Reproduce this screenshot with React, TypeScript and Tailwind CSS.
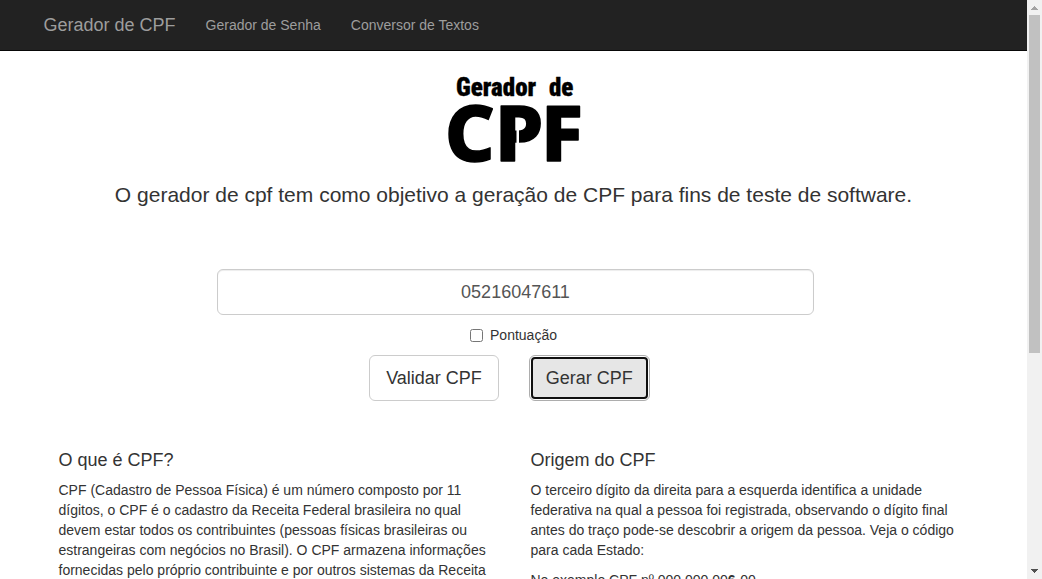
import { useState } from "react";

function Logo() {
  return (
    <svg
      viewBox="0 0 140 96"
      className="mx-auto block h-24 w-[140px] overflow-visible"
      role="img"
      aria-label="Gerador de CPF"
    >
      <g fill="#000" stroke="#000" strokeLinejoin="round">
        <g fontFamily='"Roboto Condensed", Roboto, sans-serif' fontWeight="900" fontSize="25" strokeWidth="0.3">
          <text x="12" y="24">Gerador</text>
          <text x="105" y="24">de</text>
        </g>
        <g fontFamily='"Noto Sans", sans-serif' fontWeight="800" fontSize="77" strokeWidth="1.6">
          <text x="1" y="89">C</text>
          <text x="51" y="89">P</text>
          <text x="97" y="89">F</text>
        </g>
      </g>
      <path d="M72.500 46h2.500v27h-2.500z" fill="#fff" />
    </svg>
  );
}

function NavBar() {
  return (
    <nav className="border-b border-[#080808] bg-[#222] text-[#9d9d9d]">
      <div className="mx-auto flex h-[50px] max-w-[970px] items-center gap-[30px] px-[15px] text-sm">
        <a href="#inicio" className="text-lg">Gerador de CPF</a>
        <a href="#senha">Gerador de Senha</a>
        <a href="#textos">Conversor de Textos</a>
      </div>
    </nav>
  );
}

function ScrollRail() {
  return (
    <div aria-hidden="true" className="flex w-[15px] shrink-0 flex-col items-center bg-[#f1f1f1]">
      <svg viewBox="0 0 15 15" className="h-[15px] w-[15px] shrink-0" shapeRendering="crispEdges">
        <path d="M7 6h1v1h1v1h1v1h1v1H4V9h1V8h1V7h1z" fill="#a3a3a3" />
      </svg>
      <div className="flex w-[11px] grow flex-col">
        <div className="h-[61.5%] bg-[#c1c1c1]" />
      </div>
      <svg viewBox="0 0 15 15" className="h-[15px] w-[15px] shrink-0" shapeRendering="crispEdges">
        <path d="M4 5h7v1h-1v1H9v1H8v1H7V8H6V7H5V6H4z" fill="#505050" />
      </svg>
    </div>
  );
}

function GeneratorForm() {
  const [cpf, setCpf] = useState("05216047611");
  return (
    <form onSubmit={(e) => e.preventDefault()} className="mt-15">
      <div className="pl-1">
        <input
          type="text"
          aria-label="CPF"
          value={cpf}
          onChange={(e) => setCpf(e.target.value)}
          className="mx-auto block h-[46px] w-full max-w-[597px] rounded-md border border-[#ccc] bg-white px-4 text-center text-lg text-[#555] shadow-[inset_0_1px_1px_rgba(0,0,0,0.075)]"
        />
      </div>
      <div className="mt-[10px] flex items-center justify-center">
        <label className="flex items-center gap-[7px] text-sm">
          <input type="checkbox" className="h-[13px] w-[13px]" />
          Pontuação
        </label>
      </div>
      <div className="mt-[10px] flex justify-center gap-[30px] pr-2 text-lg">
        <button type="button" className="h-[46px] rounded-md border border-[#ccc] bg-white px-4">
          Validar CPF
        </button>
        <button
          type="button"
          className="h-[46px] rounded-md border border-[#adadad] bg-white p-px"
        >
          <span className="flex h-full items-center rounded-[4px] border-2 border-[#101010] bg-[#e6e6e6] px-[13px]">
            Gerar CPF
          </span>
        </button>
      </div>
    </form>
  );
}

export default function App() {
  return (
    <div className="flex h-screen overflow-hidden bg-white font-['Liberation_Sans',Arial,sans-serif] text-[#333]">
      <div className="min-w-0 grow overflow-hidden">
        <NavBar />
        <main className="mx-auto max-w-[970px] px-[30px] pt-[21px]">
          <Logo />
          <p className="mt-3 text-center text-[21px] leading-[29px]">
            O gerador de cpf tem como objetivo a geração de CPF para fins de teste de software.
          </p>
          <GeneratorForm />
          <div className="mt-[49px] grid grid-cols-2 gap-[34px] text-sm">
            <section>
              <h4 className="text-lg leading-5">O que é CPF?</h4>
              <p className="mt-[10px]">
                CPF (Cadastro de Pessoa Física) é um número composto por 11 dígitos, o CPF é o
                cadastro da Receita Federal brasileira no qual devem estar todos os contribuintes
                (pessoas físicas brasileiras ou estrangeiras com negócios no Brasil). O CPF armazena
                informações fornecidas pelo próprio contribuinte e por outros sistemas da Receita
              </p>
            </section>
            <section>
              <h4 className="text-lg leading-5">Origem do CPF</h4>
              <p className="mt-[10px]">
                O terceiro dígito da direita para a esquerda identifica a unidade federativa na qual
                a pessoa foi registrada, observando o dígito final antes do traço pode-se descobrir
                a origem da pessoa. Veja o código para cada Estado:
              </p>
              <p className="mt-[10px]">
                No exemplo CPF nº 000.000.00<b>6</b>-00
              </p>
            </section>
          </div>
        </main>
      </div>
      <ScrollRail />
    </div>
  );
}
